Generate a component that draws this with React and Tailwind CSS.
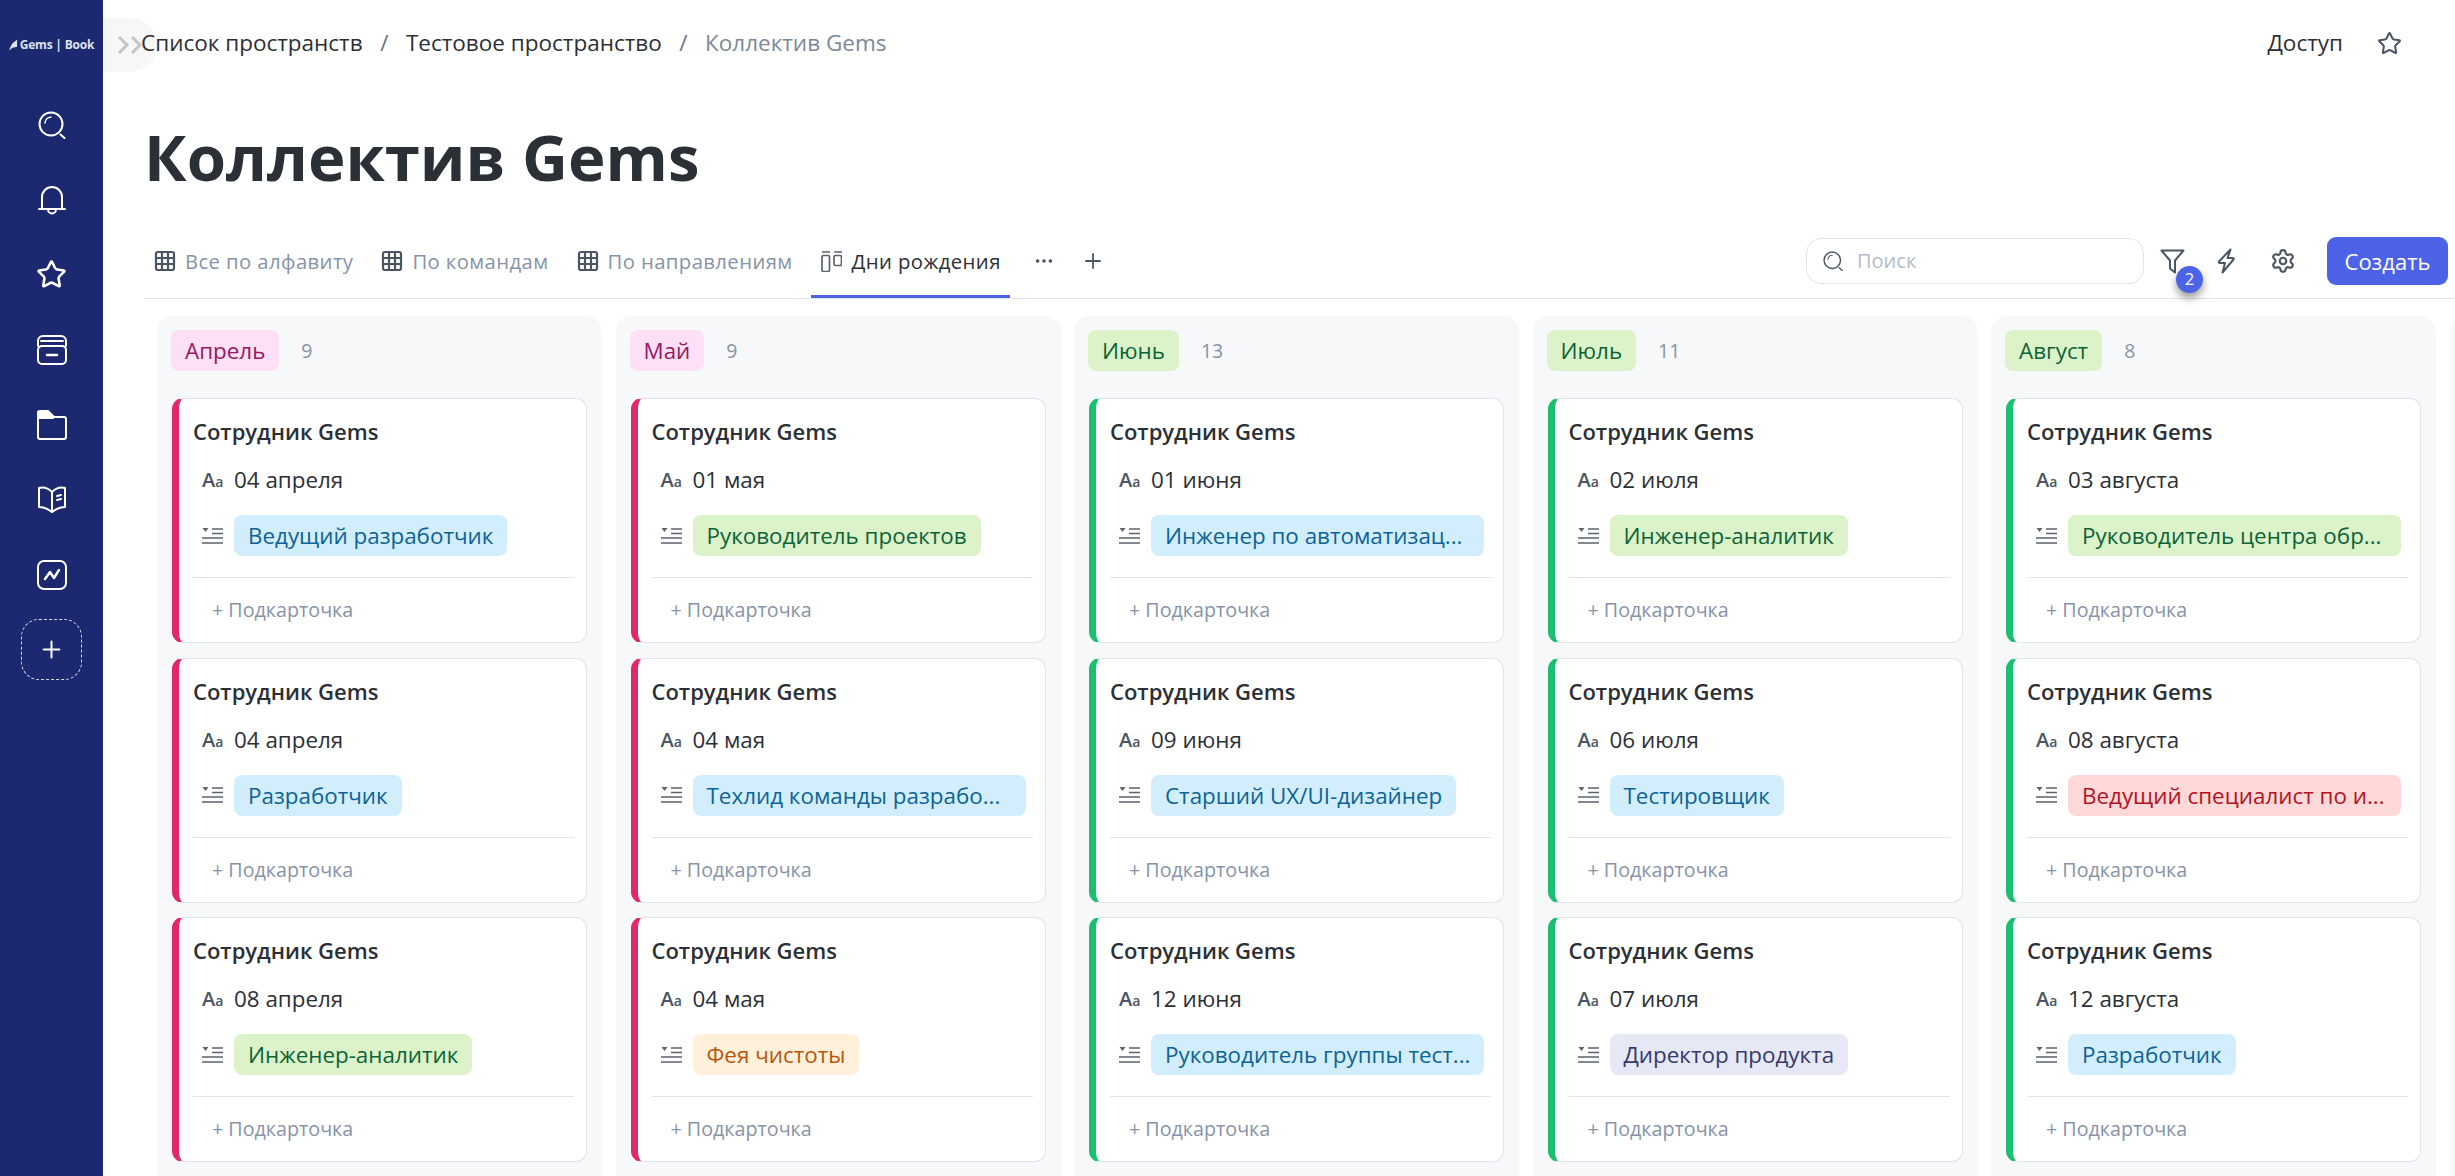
import React from 'react';
import { Star, Plus, Grid3x3, Ellipsis, Settings } from 'lucide-react';

const columns = [
  {
    name: 'Апрель', count: 9, tone: 'pink', cards: [
      { date: '04 апреля', tag: 'Ведущий разработчик', tone: 'blue' },
      { date: '04 апреля', tag: 'Разработчик', tone: 'blue' },
      { date: '08 апреля', tag: 'Инженер-аналитик', tone: 'green' },
    ],
  },
  {
    name: 'Май', count: 9, tone: 'pink', cards: [
      { date: '01 мая', tag: 'Руководитель проектов', tone: 'green' },
      { date: '04 мая', tag: 'Техлид команды разрабо...', tone: 'blue', cut: true },
      { date: '04 мая', tag: 'Фея чистоты', tone: 'orange' },
    ],
  },
  {
    name: 'Июнь', count: 13, tone: 'green', cards: [
      { date: '01 июня', tag: 'Инженер по автоматизац...', tone: 'blue', cut: true },
      { date: '09 июня', tag: 'Старший UX/UI-дизайнер', tone: 'blue' },
      { date: '12 июня', tag: 'Руководитель группы тест...', tone: 'blue', cut: true },
    ],
  },
  {
    name: 'Июль', count: 11, tone: 'green', cards: [
      { date: '02 июля', tag: 'Инженер-аналитик', tone: 'green' },
      { date: '06 июля', tag: 'Тестировщик', tone: 'blue' },
      { date: '07 июля', tag: 'Директор продукта', tone: 'indigo' },
    ],
  },
  {
    name: 'Август', count: 8, tone: 'green', cards: [
      { date: '03 августа', tag: 'Руководитель центра обр...', tone: 'green', cut: true },
      { date: '08 августа', tag: 'Ведущий специалист по и...', tone: 'red', cut: true },
      { date: '12 августа', tag: 'Разработчик', tone: 'blue' },
    ],
  },
];

const tagTones = {
  pink: 'bg-[#fddff6] text-[#96195f]',
  green: 'bg-[#dcf3c9] text-[#0c6338]',
  blue: 'bg-[#d2eefc] text-[#0d6395]',
  orange: 'bg-[#fff0dc] text-[#b9560a]',
  red: 'bg-[#ffd9d9] text-[#b3121d]',
  indigo: 'bg-[#e6e8f6] text-[#343a6b]',
};

const stripes = {
  pink: 'border-l-[#e0286a]',
  green: 'border-l-[#1abf6f]',
};

const SearchIcon = ({ className }) => (
  <svg viewBox="0 0 28 28" fill="none" stroke="currentColor" strokeWidth="2" strokeLinecap="round" className={className}>
    <circle cx="13" cy="13" r="11.5" />
    <path d="M7 12a6.5 6.5 0 0 1 6-6" strokeWidth="1.5" />
    <path d="M22.5 23.5l4 3.5" />
  </svg>
);

const BellIcon = ({ className }) => (
  <svg viewBox="0 0 28 30" fill="none" stroke="currentColor" strokeWidth="2" strokeLinecap="round" strokeLinejoin="round" className={className}>
    <path d="M1 24h26" />
    <path d="M4 24V12a10 10 0 0 1 20 0v12" />
    <path d="M10 24.5a4 4 0 0 0 8 0" />
  </svg>
);

const ArchiveIcon = ({ className }) => (
  <svg viewBox="0 0 30 30" fill="none" stroke="currentColor" strokeWidth="2" strokeLinecap="round" strokeLinejoin="round" className={className}>
    <rect x="1" y="11" width="28" height="18" rx="4" />
    <path d="M1 11V6a5 5 0 0 1 5-5h18a5 5 0 0 1 5 5v5" />
    <path d="M4 6h22" />
    <path d="M10 20h10" strokeWidth="2.5" />
  </svg>
);

const FolderIcon = ({ className }) => (
  <svg viewBox="0 0 30 30" fill="none" stroke="currentColor" strokeWidth="2" strokeLinejoin="round" className={className}>
    <path d="M1 27V3a2 2 0 0 1 2-2h8l6 6h10a2 2 0 0 1 2 2v18a2 2 0 0 1-2 2H3a2 2 0 0 1-2-2z" />
    <path d="M1 2h10l5 6H1z" fill="currentColor" />
  </svg>
);

const BookIcon = ({ className }) => (
  <svg viewBox="0 0 30 30" fill="none" stroke="currentColor" strokeWidth="2" strokeLinecap="round" strokeLinejoin="round" className={className}>
    <path d="M15 7C11 3 6 2 2 3v19c4 0 9 2 13 5 4-3 9-5 13-5V3c-4-1-9 0-13 4z" />
    <path d="M15 7v20" />
    <path d="M20 11l4-1M20 15l4-1" />
  </svg>
);

const ChartIcon = ({ className }) => (
  <svg viewBox="0 0 30 30" fill="none" stroke="currentColor" strokeWidth="2" strokeLinecap="round" strokeLinejoin="round" className={className}>
    <rect x="1" y="1" width="28" height="28" rx="6" />
    <path d="M8 19l5-7 4 6 5-8" strokeWidth="2.4" />
  </svg>
);

const AaIcon = () => (
  <span className="w-[21px] shrink-0 flex items-baseline text-[#4b5563] font-semibold leading-none">
    <span className="text-[20px]">A</span><span className="text-[14px]">a</span>
  </span>
);

const ListIcon = () => (
  <svg viewBox="0 0 21 18" className="w-[21px] h-[18px] shrink-0 text-[#5b6270]" fill="none" stroke="currentColor" strokeWidth="1.6">
    <path d="M0.5 1h6l-3 4z" fill="currentColor" stroke="none" />
    <path d="M10 2h11M10 6.5h11M0 11h21M0 16h21" />
  </svg>
);

const BoardIcon = () => (
  <span className="w-[24px] pl-px flex">
    <svg viewBox="0 0 21 21" className="w-[21px] h-[21px] text-[#5b6270]" fill="none" stroke="currentColor" strokeWidth="1.7">
      <path d="M1 1h8M13 1h8" />
      <rect x="1" y="4.5" width="7.5" height="16" rx="1.5" />
      <rect x="13" y="4.5" width="7.5" height="10" rx="1.5" />
    </svg>
  </span>
);

const FunnelIcon = () => (
  <svg viewBox="0 0 25 25" className="w-[25px] h-[25px] text-[#4b5563]" fill="none" stroke="currentColor" strokeWidth="2" strokeLinejoin="round">
    <path d="M1.5 1.5h22l-8.5 10v12l-5-4v-8z" />
  </svg>
);

const BoltIcon = () => (
  <svg viewBox="0 0 18 26" className="w-[18px] h-[26px] text-[#4b5563]" fill="none" stroke="currentColor" strokeWidth="2" strokeLinejoin="round">
    <path d="M13.5 1.5L2 13.5q-.5 1.5 1 1.5h5L5.5 24.5 16.5 11.5q.8-1.5-1-1.5h-5z" />
  </svg>
);

const Tab = ({ icon, label, active }) => (
  <div className={`h-full pb-px flex items-center gap-[8px] px-[9px] border-b-[3px] ${active ? 'border-[#4c63e8] text-[#2b2f36]' : 'border-transparent text-[#8793a8]'}`}>
    {icon}
    <span className="text-[20.3px] tracking-[0.4px] whitespace-nowrap">{label}</span>
  </div>
);

const Card = ({ card, tone }) => (
  <div className={`h-[245px] shrink-0 bg-white rounded-[11px] border border-[#e2e4e9] border-l-[7px] ${stripes[tone]} pt-[17px] pl-[14px] pr-[12px] flex flex-col`}>
    <div className="text-[22px] leading-[30px] font-semibold text-[#2b2f36]">Сотрудник Gems</div>
    <div className="mt-[19px] h-[30px] pl-[9px] flex items-center gap-[11px]">
      <AaIcon />
      <span className="text-[22.4px] text-[#2b2f36]">{card.date}</span>
    </div>
    <div className="mt-[20px] pl-[9px] flex items-center gap-[11px] min-w-0">
      <ListIcon />
      <span className={`${card.cut ? 'w-[333px]' : ''} h-[41px] leading-[41px] px-[14px] rounded-[8px] text-[22.4px] whitespace-nowrap ${tagTones[card.tone]}`}>{card.tag}</span>
    </div>
    <div className="mt-[21px] border-t border-[#e2e4e9]" />
    <div className="flex-1 pl-[19px] flex items-center text-[19.7px] text-[#8793a8]">+ Подкарточка</div>
  </div>
);

const Column = ({ column }) => (
  <div className="w-[445px] shrink-0 h-full bg-[#f7f8fa] rounded-t-[16px] pl-[14px] pr-[15px] pt-[14px] flex flex-col">
    <div className="h-[41px] flex items-center gap-[22px]">
      <span className={`h-[41px] leading-[41px] px-[14px] rounded-[8px] text-[22.4px] ${tagTones[column.tone]}`}>{column.name}</span>
      <span className="text-[19.5px] text-[#8793a8]">{column.count}</span>
    </div>
    <div className="mt-[27px] flex flex-col gap-[14.5px] pl-px">
      {column.cards.map((card, i) => <Card key={i} card={card} tone={column.tone} />)}
    </div>
  </div>
);

export default function App() {
  return (
    <div className="w-[2455px] h-[1176px] overflow-hidden flex bg-white font-['Open_Sans','Noto_Sans',sans-serif]">
      {/* Sidebar */}
      <aside className="w-[103px] shrink-0 bg-[#1c2870] text-white flex flex-col items-center">
        <div className="h-[87px] pt-[36px] flex items-start gap-[2px] text-[12px] tracking-[-0.2px] font-bold text-[#dfe2f0] whitespace-nowrap">
          <svg viewBox="0 0 10 12" className="w-[9px] h-[12px] mt-[3px]" fill="currentColor"><path d="M9 0v8l-5 1-4 3 2-5 2-3z" /></svg>
          Gems | Book
        </div>
        <div className="flex flex-col items-center">
          <div className="h-[75px] flex items-center"><SearchIcon className="w-[28px] h-[28px]" /></div>
          <div className="h-[75px] flex items-center"><BellIcon className="w-[28px] h-[30px]" /></div>
          <div className="h-[75px] flex items-center"><Star size={31} strokeWidth={2} /></div>
          <div className="h-[75px] flex items-center"><ArchiveIcon className="w-[30px] h-[30px]" /></div>
          <div className="h-[75px] flex items-center"><FolderIcon className="w-[30px] h-[30px]" /></div>
          <div className="h-[75px] flex items-center"><BookIcon className="w-[30px] h-[30px]" /></div>
          <div className="h-[75px] flex items-center"><ChartIcon className="w-[30px] h-[30px]" /></div>
          <div className="mt-[7px] w-[61px] h-[61px] rounded-[18px] border border-dashed border-[#d5d9ea] flex items-center justify-center">
            <Plus size={27} strokeWidth={1.8} />
          </div>
        </div>
      </aside>

      <main className="flex-1 min-w-0 flex flex-col relative">
        {/* Collapse handle */}
        <div className="absolute left-0 top-[18px] w-[54px] h-[54px] rounded-r-full bg-[#f7f7f7] flex items-center pl-[15px] text-[#c4c4c4]">
          <svg viewBox="0 0 26 18" className="w-[26px] h-[18px]" fill="none" stroke="currentColor" strokeWidth="3"><path d="M1 1l8 8-8 8M14 1l8 8-8 8" /></svg>
        </div>

        {/* Breadcrumbs */}
        <header className="relative h-[86px] shrink-0 pl-[38px] pr-[53px] flex items-center text-[22.5px]">
          <span className="text-[#2b2f36]">Список пространств</span>
          <span className="mx-[17.5px] text-[#6b7280]">/</span>
          <span className="text-[#2b2f36]">Тестовое пространство</span>
          <span className="mx-[17.5px] text-[#6b7280]">/</span>
          <span className="text-[#7d8798]">Коллектив Gems</span>
          <span className="ml-auto text-[#2b2f36]">Доступ</span>
          <Star size={25} strokeWidth={2} className="ml-[34px] text-[#4b5563]" />
        </header>

        {/* Title */}
        <h1 className="pl-[41px] h-[142px] shrink-0 flex items-center text-[63.5px] font-bold text-[#2b2f36] leading-none">Коллектив Gems</h1>

        {/* Tabs */}
        <div className="ml-[41px] h-[71px] shrink-0 border-b border-[#e2e4e9] flex items-center pr-[7px]">
          <div className="h-full flex items-center gap-[9px]">
            <Tab icon={<Grid3x3 size={24} strokeWidth={2.2} className="text-[#4b5563]" />} label="Все по алфавиту" />
            <Tab icon={<Grid3x3 size={24} strokeWidth={2.2} className="text-[#4b5563]" />} label="По командам" />
            <Tab icon={<Grid3x3 size={24} strokeWidth={2.2} className="text-[#4b5563]" />} label="По направлениям" />
            <Tab icon={<BoardIcon />} label="Дни рождения" active />
          </div>
          <Ellipsis size={22} className="ml-[23px] mb-[4px] text-[#4b5563]" />
          <Plus size={24} strokeWidth={1.8} className="ml-[26px] mb-[4px] text-[#4b5563]" />
          <div className="ml-auto h-full pb-[4px] flex items-center">
            <div className="w-[338px] h-[46px] rounded-[15px] border border-[#e2e4e9] flex items-center pl-[16px] gap-[14px]">
              <SearchIcon className="w-[20px] h-[20px] text-[#4b5563]" />
              <span className="text-[20px] text-[#b3bccb]">Поиск</span>
            </div>
            <div className="relative ml-[16px] w-[25px] h-[25px]">
              <FunnelIcon />
              <span className="absolute left-[16px] top-[17px] w-[27px] h-[27px] rounded-full bg-[#4c63e8] text-white text-[16.5px] flex items-center justify-center shadow-[0_5px_8px_rgba(0,0,0,0.4)]">2</span>
            </div>
            <div className="ml-[32px] w-[18px] h-[26px]"><BoltIcon /></div>
            <Settings size={26} strokeWidth={2} className="ml-[35px] text-[#4b5563]" />
            <button className="ml-[31px] w-[121px] h-[48px] rounded-[9px] bg-[#4c63e8] text-white text-[22px]">Создать</button>
          </div>
        </div>

        {/* Board */}
        <div className="flex-1 min-h-0 pt-[17px] pl-[54px] flex gap-[13.5px]">
          {columns.map((column) => <Column key={column.name} column={column} />)}
          <div className="w-[445px] shrink-0 h-full bg-[#f7f8fa] rounded-t-[16px]" />
        </div>
      </main>
    </div>
  );
}
